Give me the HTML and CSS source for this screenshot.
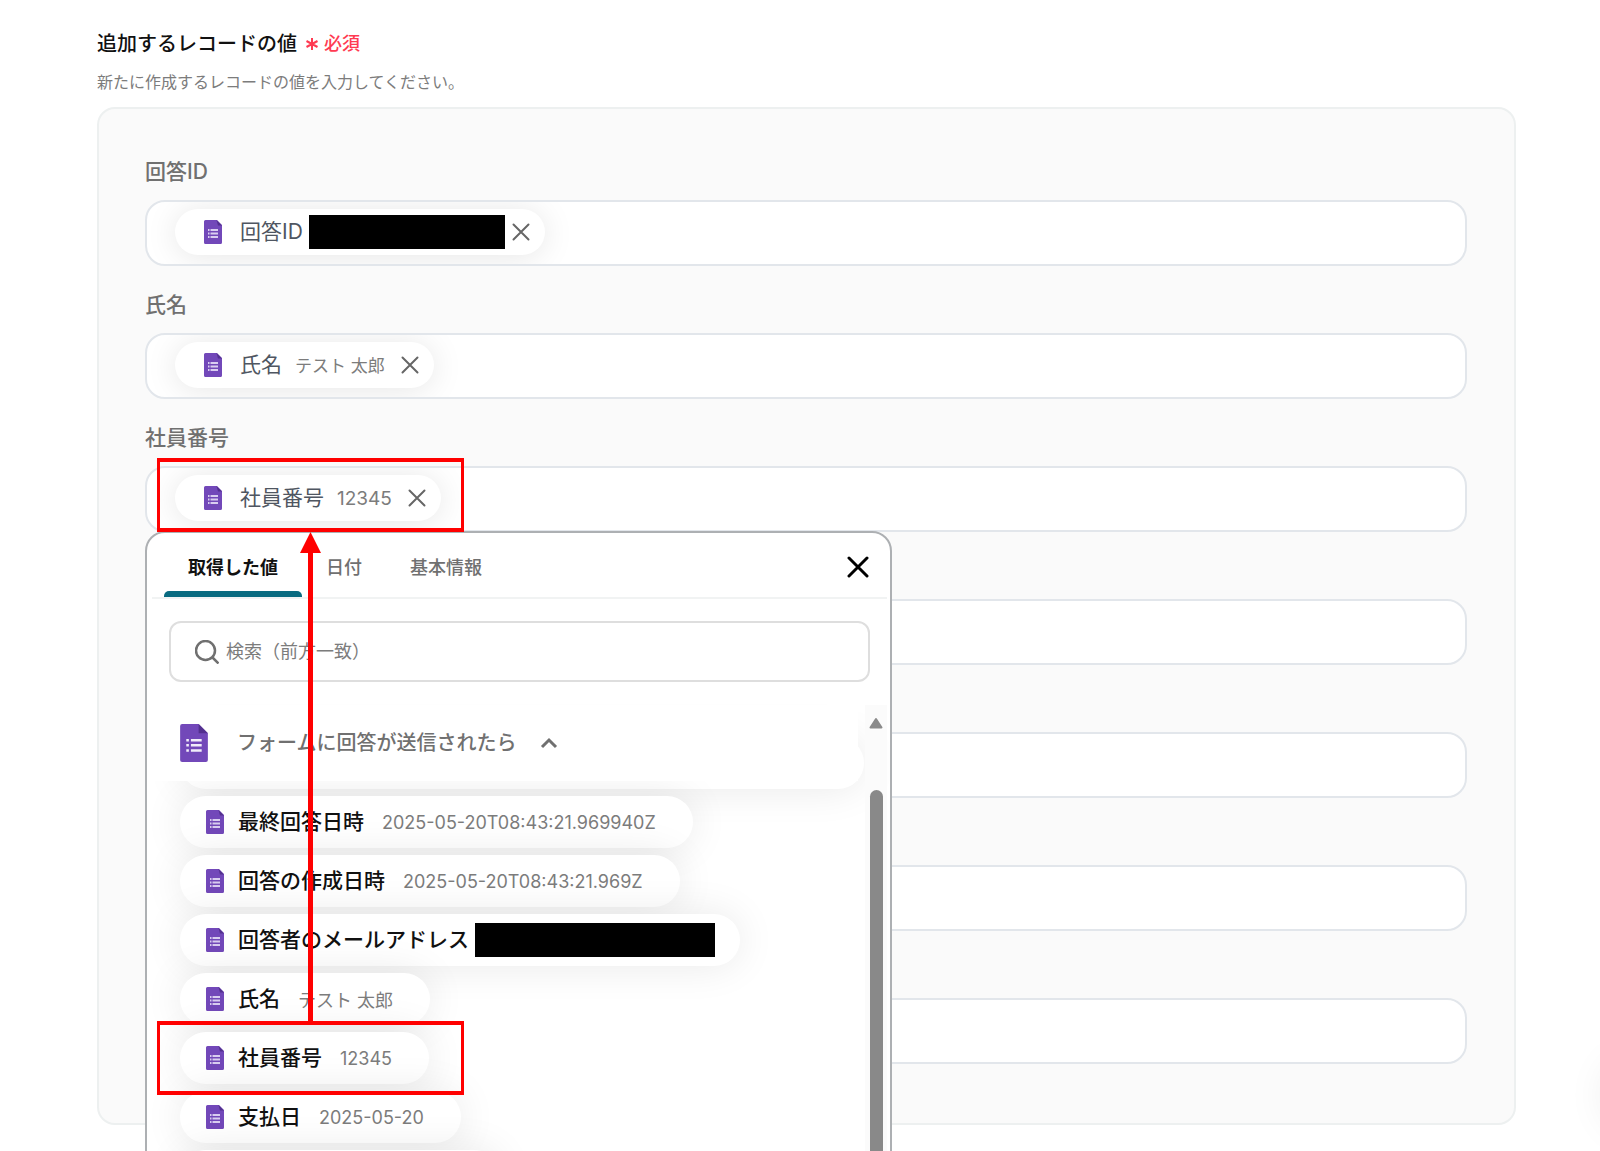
FILE: index.html
```html
<!DOCTYPE html>
<html lang="ja">
<head>
<meta charset="utf-8">
<meta name="viewport" content="width=device-width, initial-scale=1">
<title>追加するレコードの値</title>
<link rel="stylesheet" href="styles.css">
</head>
<body>
<svg class="sprite" aria-hidden="true">
  <symbol id="form" viewBox="0 0 27 37">
    <path fill="#7248b9" d="M2 0h16l9 9v26a2 2 0 0 1-2 2H2a2 2 0 0 1-2-2V2a2 2 0 0 1 2-2z"/>
    <path fill="#53308f" d="M18 0l9 9h-9z"/>
    <path fill="#f1edf9" d="M6 14.500h2.500v2.500H6zM10.500 14.500H21v2.500H10.500zM6 19.500h2.500v2.500H6zM10.500 19.500H21v2.500H10.500zM6 24.500h2.500v2.500H6zM10.500 24.500H21v2.500H10.500z"/>
  </symbol>
  <symbol id="form-small" viewBox="0 0 18 24">
    <path fill="#7248b9" d="M1.500 0H13l5 5v17.500a1.500 1.500 0 0 1-1.500 1.500h-15A1.500 1.500 0 0 1 0 22.500v-21A1.500 1.500 0 0 1 1.500 0z"/>
    <path fill="#53308f" d="M12.500 0L18 5.500h-4z"/>
    <path fill="#d9cdf0" d="M4 9h1.500v2H4zM6.500 9H14v2H6.500zM4 12.500h1.500v2H4zM6.500 12.500H14v2H6.500zM4 16h1.500v2H4zM6.500 16H14v2H6.500z"/>
  </symbol>
  <symbol id="cross" viewBox="0 0 18 18">
    <path fill="none" stroke="currentColor" stroke-width="2" stroke-linecap="round" d="M1.500 1.500l15 15M16.500 1.500l-15 15"/>
  </symbol>
</svg>
<main class="page">
  <h1 class="title">追加するレコードの値<span class="required"><svg class="asterisk" viewBox="0 0 14 14"><path d="M7 1v12M1.500 4l11 6M12.500 4l-11 6" fill="none" stroke="currentColor" stroke-width="2"/></svg>必須</span></h1>
  <p class="description">新たに作成するレコードの値を入力してください。</p>
  <form class="record">
    <div class="field">
      <label class="label" for="f1">回答ID</label>
      <div class="box">
        <span class="chip"><svg class="doc"><use href="#form-small"/></svg><span class="chip-name">回答ID</span><span class="masked"></span><button class="remove near" type="button" aria-label="削除"><svg class="x"><use href="#cross"/></svg></button></span>
        <input class="entry" id="f1" type="text">
      </div>
    </div>
    <div class="field">
      <label class="label" for="f2">氏名</label>
      <div class="box">
        <span class="chip"><svg class="doc"><use href="#form-small"/></svg><span class="chip-name">氏名</span><span class="chip-value kana">テスト 太郎</span><button class="remove" type="button" aria-label="削除"><svg class="x"><use href="#cross"/></svg></button></span>
        <input class="entry" id="f2" type="text">
      </div>
    </div>
    <div class="field active">
      <label class="label" for="f3">社員番号</label>
      <div class="box">
        <span class="chip"><svg class="doc"><use href="#form-small"/></svg><span class="chip-name">社員番号</span><span class="chip-value">12345</span><button class="remove" type="button" aria-label="削除"><svg class="x"><use href="#cross"/></svg></button></span>
        <input class="entry" id="f3" type="text">
      </div>
      <section class="panel">
        <div class="panel-head">
          <button class="tab selected" type="button">取得した値</button>
          <button class="tab" type="button">日付</button>
          <button class="tab" type="button">基本情報</button>
          <button class="close" type="button" aria-label="閉じる"><svg class="close-icon" viewBox="0 0 22 22"><path d="M2 2l18 18M20 2L2 20" fill="none" stroke="currentColor" stroke-width="3" stroke-linecap="round"/></svg></button>
        </div>
        <div class="search">
          <svg class="magnifier" viewBox="0 0 24 24"><path d="M20 10.500a9.500 9.500 0 1 1-19 0a9.500 9.500 0 0 1 19 0zM17.500 17.500l6 6" fill="none" stroke="currentColor" stroke-width="2.500"/></svg>
          <input class="search-input" type="text" aria-label="検索" placeholder="検索（前方一致）">
        </div>
        <div class="results">
          <div class="list">
            <button class="group" type="button"><svg class="group-icon"><use href="#form"/></svg><span class="group-name">フォームに回答が送信されたら</span><svg class="chevron" viewBox="0 0 18 12"><path d="M2 10l7-7 7 7" fill="none" stroke="currentColor" stroke-width="3"/></svg></button>
            <div class="item scrolled"></div>
            <button class="item" type="button"><svg class="doc"><use href="#form-small"/></svg><span class="item-name">最終回答日時</span><span class="item-value">2025-05-20T08:43:21.969940Z</span></button>
            <button class="item" type="button"><svg class="doc"><use href="#form-small"/></svg><span class="item-name">回答の作成日時</span><span class="item-value">2025-05-20T08:43:21.969Z</span></button>
            <button class="item item-masked" type="button"><svg class="doc"><use href="#form-small"/></svg><span class="item-name">回答者のメールアドレス</span><span class="masked wide"></span></button>
            <button class="item" type="button"><svg class="doc"><use href="#form-small"/></svg><span class="item-name">氏名</span><span class="item-value">テスト 太郎</span></button>
            <button class="item" type="button"><svg class="doc"><use href="#form-small"/></svg><span class="item-name">社員番号</span><span class="item-value">12345</span></button>
            <button class="item" type="button"><svg class="doc"><use href="#form-small"/></svg><span class="item-name">支払日</span><span class="item-value">2025-05-20</span></button>
            <div class="item short"></div>
          </div>
          <div class="scrollbar"><svg class="up" viewBox="0 0 14 12"><path d="M7 2L12.500 10.500H1.500z" fill="#8a8a8a" stroke="#8a8a8a" stroke-width="2" stroke-linejoin="round"/></svg><span class="thumb"></span></div>
        </div>
      </section>
      <div class="mark mark-target"></div>
      <div class="mark mark-source"></div>
      <svg class="arrow" viewBox="0 0 21 490"><path d="M10.500 0L21 21H13V490H8V21H0z" fill="#f00"/></svg>
    </div>
    <div class="field"><span class="label"></span><div class="box"><input class="entry" type="text" aria-label="項目4"></div></div>
    <div class="field"><span class="label"></span><div class="box"><input class="entry" type="text" aria-label="項目5"></div></div>
    <div class="field"><span class="label"></span><div class="box"><input class="entry" type="text" aria-label="項目6"></div></div>
    <div class="field"><span class="label"></span><div class="box"><input class="entry" type="text" aria-label="項目7"></div></div>
  </form>
  <div class="floating"></div>
</main>
</body>
</html>
```
FILE: styles.css
```css
* { box-sizing: border-box; }
body { margin: 0; background: #fff; font-family: Inter, "Noto Sans CJK JP", sans-serif; color: #111; }
button, input { font: inherit; color: inherit; border: 0; background: none; padding: 0; margin: 0; outline: 0; }
svg { display: block; flex: none; }
.sprite { position: absolute; width: 0; height: 0; }

.page { position: relative; height: 100vh; overflow: hidden; padding: 28px 84px 0 97px; }
.title { display: flex; align-items: center; margin: 0; font-size: 20px; line-height: 32px; font-weight: 500; }
.required { display: flex; align-items: center; gap: 5px; margin-left: 8px; font-size: 18px; color: #ff3b52; }
.asterisk { width: 14px; height: 14px; }
.description { margin: 10px 0 13px; font-size: 16px; line-height: 24px; color: #7c7c7c; }

.record { display: flex; flex-direction: column; gap: 22px; padding: 46px 47px 59px 46px; border: 2px solid #edf0f0; border-radius: 18px; background: #fafafa; }
.field { position: relative; display: flex; flex-direction: column; gap: 12px; }
.active { z-index: 1; }
.label { height: 33px; font-size: 21px; line-height: 33px; font-weight: 500; color: #707070; }
.box { display: flex; align-items: center; height: 66px; padding: 0 28px 2px; border: 2px solid #e2e6eb; border-radius: 20px; background: #fff; overflow: hidden; }
.entry { flex: 1; min-width: 0; height: 46px; }

.chip { display: flex; align-items: center; height: 46px; padding: 0 15px 0 29px; border-radius: 23px; background: #fff; box-shadow: 0 2px 32px rgba(0, 0, 0, .1); }
.doc { width: 18px; height: 24px; }
.chip-name { margin-left: 18px; font-size: 21px; line-height: 32px; color: #4f5661; }
.chip-value { margin-left: 13px; font-size: 19px; color: #7c7c7c; }
.kana { padding-bottom: 2px; font-size: 17px; }
.remove { margin-left: 16px; color: #666; }
.near { margin-left: 7px; }
.x { width: 18px; height: 18px; }
.masked { width: 196px; height: 34px; margin-left: 6px; background: #000; }

.panel { position: absolute; z-index: 0; top: 110px; left: 0; display: flex; flex-direction: column; width: 747px; height: 660px; padding: 0 3px 0 5px; border: 2px solid #adb0b3; border-radius: 20px; background: #fff; overflow: hidden; }
.panel-head { display: flex; flex: none; height: 66px; padding: 0 18px 0 12px; border-bottom: 2px solid #f1f3f3; }
.tab { height: 64px; padding: 12px 24px 6px; font-size: 18px; line-height: 28px; font-weight: 500; color: #707070; }
.selected { position: relative; font-weight: 600; color: #111; }
.selected::after { content: ""; position: absolute; right: 0; bottom: 0; left: 0; height: 6px; border-radius: 5px 5px 0 0; background: #086a80; }
.close { margin-left: auto; padding-top: 4px; color: #000; }
.close-icon { width: 22px; height: 22px; }
.search { display: flex; flex: none; align-items: center; gap: 7px; height: 61px; margin: 22px 17px 23px; padding: 0 24px; border: 2px solid #dedede; border-radius: 12px; }
.magnifier { width: 24px; height: 24px; color: #707070; }
.search-input { flex: 1; min-width: 0; font-size: 18px; }
.search-input::placeholder { color: #7c7c7c; opacity: 1; }

.results { display: flex; flex: 1; min-height: 0; }
.list { flex: 1; min-width: 0; display: flex; flex-direction: column; align-items: flex-start; gap: 7px; padding-right: 1px; }
.group { position: relative; z-index: 1; display: flex; flex: none; align-items: center; width: 706px; height: 76px; padding-left: 28px; background: #fff; font-size: 20px; font-weight: 500; color: #707070; }
.group-name { padding-bottom: 3px; }
.group-icon { width: 28px; height: 38px; margin-right: 29px; }
.chevron { width: 18px; height: 12px; margin-left: 24px; }
.item { display: flex; flex: none; align-items: center; height: 52px; margin-left: 28px; padding: 0 37px 0 26px; border-radius: 26px; background: #fff; box-shadow: 0 0 40px rgba(0, 0, 0, .09); white-space: nowrap; }
.item-name { margin-left: 14px; padding-bottom: 1px; font-size: 21px; line-height: 32px; font-weight: 500; }
.item-value { margin-left: 18px; font-size: 18px; color: #7c7c7c; }
.item-masked { padding-right: 25px; }
.wide { width: 240px; }
.scrolled { width: 684px; margin-top: -51px; }
.short { width: 320px; }
.scrollbar { display: flex; flex-direction: column; flex: none; align-items: center; width: 22px; padding-top: 12px; background: #fbfbfb; }
.up { width: 14px; height: 12px; margin-bottom: 61px; }
.thumb { flex: 1; width: 13px; border-radius: 7px; background: #898989; }

/* walkthrough annotations over the form */
.mark { position: absolute; z-index: 1; left: 12px; width: 307px; height: 74px; border: 4px solid #f00; border-width: 4px 3px; pointer-events: none; }
.mark-target { top: 37px; }
.mark-source { top: 600px; }
.arrow { position: absolute; z-index: 1; top: 111px; left: 155px; width: 21px; height: 490px; pointer-events: none; }
.floating { position: absolute; right: -76px; bottom: 20px; width: 72px; height: 72px; border-radius: 50%; box-shadow: 0 0 40px rgba(0, 0, 0, .08); }
```
